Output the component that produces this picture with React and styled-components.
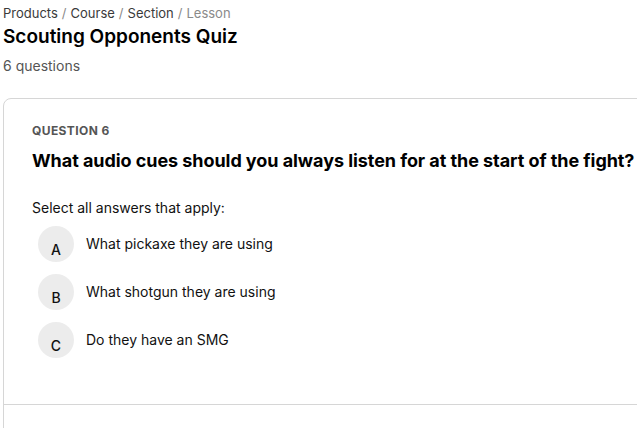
import React from 'react'
import styled, { createGlobalStyle } from 'styled-components'

const GlobalStyle = createGlobalStyle`
  html, body {
    margin: 0;
    padding: 0;
    background: #fff;
    overflow: hidden;
  }
  body {
    font-family: Inter, "Noto Sans", sans-serif;
    color: #111;
  }
`

const quiz = {
  crumbs: ['Products', 'Course', 'Section'],
  current: 'Lesson',
  title: 'Scouting Opponents Quiz',
  count: 6,
  question: {
    number: 6,
    text: 'What audio cues should you always listen for at the start of the fight?',
    hint: 'Select all answers that apply:',
    answers: [
      { key: 'A', label: 'What pickaxe they are using' },
      { key: 'B', label: 'What shotgun they are using' },
      { key: 'C', label: 'Do they have an SMG' }
    ]
  }
}

const App = () => {
  const { question } = quiz
  return (
    <Page>
      <GlobalStyle />
      <Header>
        <Breadcrumbs>
          {quiz.crumbs.map(c => (
            <React.Fragment key={c}>
              <Crumb>{c}</Crumb>
              <Sep>/</Sep>
            </React.Fragment>
          ))}
          <Current>{quiz.current}</Current>
        </Breadcrumbs>
        <Title>{quiz.title}</Title>
        <Count>{quiz.count} questions</Count>
      </Header>
      <Card>
        <CardBody>
          <Eyebrow>Question {question.number}</Eyebrow>
          <Question>{question.text}</Question>
          <Hint>{question.hint}</Hint>
          <Answers>
            {question.answers.map(a => (
              <Answer key={a.key}>
                <Letter>{a.key}</Letter>
                <AnswerText>{a.label}</AnswerText>
              </Answer>
            ))}
          </Answers>
        </CardBody>
        <CardFooter />
      </Card>
    </Page>
  )
}

export default App

const Page = styled.div`
  padding: 4px 0 0 3px;
  width: 720px;
`
const Header = styled.header`
  display: flex;
  flex-direction: column;
`
const Breadcrumbs = styled.nav`
  display: flex;
  align-items: baseline;
  gap: 4px;
  font-size: 13px;
  line-height: 18px;
`
const Crumb = styled.span`
  color: #3a3a3a;
`
const Sep = styled.span`
  color: #8a8a8a;
`
const Current = styled.span`
  color: #8a8a8a;
`
const Title = styled.h1`
  margin: 2px 0 0;
  font-size: 19px;
  line-height: 26px;
  font-weight: 600;
  color: #000;
`
const Count = styled.p`
  margin: 7px 0 0;
  font-size: 14px;
  line-height: 18px;
  color: #555;
`
const Card = styled.section`
  margin-top: 23px;
  border: 1px solid #d6d6d6;
  border-radius: 8px;
  background: #fff;
`
const CardBody = styled.div`
  height: 306px;
  padding: 24px 28px 0;
  box-sizing: border-box;
  border-bottom: 1px solid #d6d6d6;
`
const Eyebrow = styled.div`
  font-size: 12px;
  line-height: 16px;
  font-weight: 700;
  letter-spacing: 0.4px;
  text-transform: uppercase;
  color: #555;
`
const Question = styled.h2`
  margin: 10px 0 0;
  font-size: 18px;
  line-height: 24px;
  font-weight: 700;
  letter-spacing: -0.06px;
  color: #000;
`
const Hint = styled.p`
  margin: 26px 0 0;
  font-size: 14px;
  line-height: 18px;
  color: #111;
`
const Answers = styled.ul`
  list-style: none;
  margin: 9px 0 0;
  padding: 0 0 0 6px;
  display: flex;
  flex-direction: column;
  gap: 12px;
`
const Answer = styled.li`
  display: flex;
  align-items: center;
  gap: 12px;
  cursor: pointer;
`
const Letter = styled.span`
  width: 36px;
  height: 36px;
  border-radius: 50%;
  background: #ececec;
  box-sizing: border-box;
  padding-top: 11px;
  display: flex;
  align-items: center;
  justify-content: center;
  font-size: 14px;
  line-height: 16px;
  font-weight: 500;
  color: #111;
  flex-shrink: 0;
`
const AnswerText = styled.span`
  font-size: 14px;
  line-height: 18px;
  color: #111;
`
const CardFooter = styled.div`
  height: 60px;
`
